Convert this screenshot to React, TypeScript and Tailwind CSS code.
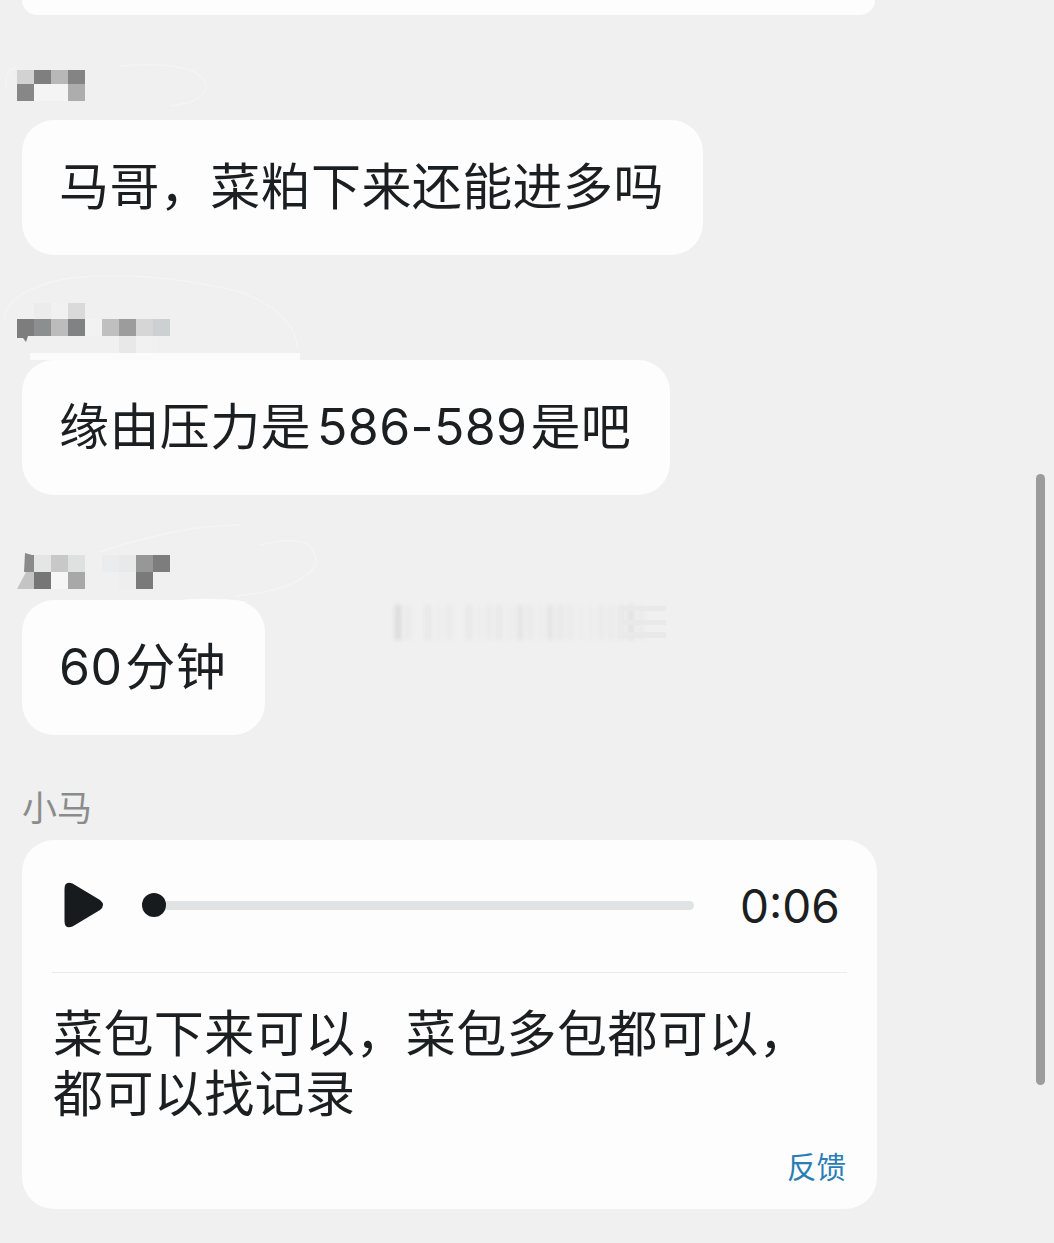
const CJK = { fontFamily: '"Inter", "Noto Sans CJK SC", sans-serif' };

type Cell = string;
function Mosaic({ rows, heights, className }: { rows: Cell[][]; heights: number[]; className?: string }) {
  return (
    <div className={"flex flex-col ml-[-5px] " + (className ?? "")}>
      {rows.map((r, i) => (
        <div key={i} className="flex" style={{ height: heights[i] }}>
          {r.map((c, j) => (
            <div key={j} className="w-[17px] h-full" style={{ background: c }} />
          ))}
        </div>
      ))}
    </div>
  );
}

function Bubble({ text, w }: { text: React.ReactNode; w: string }) {
  return (
    <div
      className={"h-[135px] bg-[#fdfdfd] rounded-[32px] flex items-center pl-[37px] text-[50px] tracking-[0.4px] text-[#1b1f21] whitespace-nowrap shrink-0 " + w}
    >
      {text}
    </div>
  );
}

const bg = "#f0f0f0";
const m1 = [
  ["#d2d2d2", "#7f7f7f", "#b8b8b8", "#848484"],
  ["#878787", "#f4f4f4", "#f4f4f4", "#adadad"],
];
const m2 = [
  [bg, "#ececec", "#f1f1f1", "#dadada", bg, bg, bg, bg, bg],
  ["#7d7d7d", "#8b8f8f", "#bcbcbc", "#7f8383", "#f2f2f2", "#bfbfbf", "#9c9c9c", "#d6d6d6", "#cdd0d0"],
  [bg, bg, bg, bg, bg, bg, "#e8e8e8", "#f1f1f1", bg],
];
const m3 = [
  ["#f0f0f0", "#e4e6e6", "#c8c8c8", "#dfe1e1", "#f0f0f0", "#ebeced", "#e8eaea", "#979797", "#7d7d7d"],
  ["#f0f0f0", "#767676", "#f6f6f6", "#a8a8a8", bg, bg, "#eeeeee", "#7a7a7a", bg],
];
const smudge = [8, 2, 0, 3, 1, 2, 0, 3, 1, 2, 3, 1, 4, 2, 1, 4, 3, 2, 1, 1, 2, 2, 3, 5, 2, 0, 0];

export default function App() {
  return (
    <div className="relative w-[1054px] h-[1243px] overflow-hidden bg-[#f0f0f0]" style={CJK}>
      <div className="pl-[22px] flex flex-col">
        <div className="h-[15px] w-[853px] bg-[#fdfdfd] rounded-b-[28px]" />

        <Mosaic rows={m1} heights={[14, 17]} className="mt-[55px]" />
        <div className="mt-[19px]">
          <Bubble w="w-[681px]" text="马哥，菜粕下来还能进多吗" />
        </div>

        <Mosaic rows={m2} heights={[16, 17, 17]} className="mt-[48px]" />
        <div className="h-[7px] w-[270px] ml-[8px] bg-[#fbfbfb]" />
        <Bubble
          w="w-[648px]"
          text={
            <>
              缘由压力是<span className="ml-[6px] mr-[3px]">586-589</span>是吧
            </>
          }
        />

        <Mosaic rows={m3} heights={[17, 17]} className="mt-[60px]" />
        <div className="mt-[11px] flex items-start">
          <Bubble
            w="w-[243px]"
            text={
              <>
                60<span className="ml-[3px]">分钟</span>
              </>
            }
          />
          <div className="ml-[130px] mt-[5px] h-[35px] w-[270px] flex justify-between blur-[2px]">
            {smudge.map((v, i) => (
              <div key={i} className="w-[6px] h-full" style={{ background: `rgba(150,150,150,${v * 0.03})` }} />
            ))}
          </div>
        </div>

        <div className="mt-[51px] h-[54px] text-[35px] leading-[44px] text-[#8a8c8c]">小马</div>

        <div className="w-[855px] h-[369px] bg-[#fdfdfd] rounded-[32px] flex flex-col px-[30px]">
          <div className="h-[133px] flex items-center border-b border-[#ececec] shrink-0">
            <svg width="40" height="46" viewBox="0 0 40 46" className="ml-[12px] mb-[2px] shrink-0">
              <path
                d="M0.5 7 Q0.5 -1.5 8.5 1.5 L36 18 Q42 23 36 28 L8.5 44.5 Q0.5 47.5 0.5 39 Z"
                fill="#171b1e"
              />
            </svg>
            <div className="ml-[38px] mb-[2px] flex items-center w-[552px] relative shrink-0">
              <div className="h-[9px] w-full bg-[#e0e3e3] rounded-full ml-[12px]" />
              <div className="absolute left-0 top-1/2 -translate-y-1/2 w-[24px] h-[24px] rounded-full bg-[#171b1e]" />
            </div>
            <div className="ml-[46px] text-[46px] text-[#1b1f21] leading-none">0:06</div>
          </div>
          <div className="mt-[31px] text-[50px] leading-[60px] tracking-[0.4px] text-[#1b1f21] pl-[1px]">
            <div>菜包下来可以，菜包多包都可以，</div>
            <div>都可以找记录</div>
          </div>
          <div className="mt-[23px] self-end text-[29.5px] leading-[40px] text-[#2b7db5] mr-[1px]">反馈</div>
        </div>
      </div>

      <svg className="absolute left-0 top-0 pointer-events-none" width="1054" height="1243" viewBox="0 0 1054 1243" fill="none">
        <g stroke="#f4f4f4" strokeWidth="1.5">
          <path d="M6 88 Q4 70 16 68 M120 66 Q200 60 206 85 Q206 102 170 106" />
          <path d="M4 320 Q6 290 70 278 Q150 270 240 292 Q295 312 298 350" />
          <path d="M100 552 Q180 525 240 525 M260 545 Q318 530 316 565 Q300 590 235 596" />
        </g>
        <path d="M170 601 Q210 596 250 602 Z" fill="#fdfdfd" />
        <path d="M17 319 H34 V336 H28 L26 342 L23 338 H17 Z" fill="#7d7d7d" />
        <path d="M25 553 L32 555 H34 V572 H24 Z" fill="#8a8a8a" />
        <path d="M26 572 H34 V589 H17 Z" fill="#c4c4c4" />
        <g fill="#e9e9e9">
          <rect x="622" y="606" width="44" height="5" />
          <rect x="622" y="620" width="44" height="5" />
          <rect x="622" y="632" width="44" height="6" />
        </g>
      </svg>

      <div className="absolute left-[1036px] top-[474px] w-[9px] h-[611px] rounded-full bg-[#9c9c9c]" />
    </div>
  );
}
